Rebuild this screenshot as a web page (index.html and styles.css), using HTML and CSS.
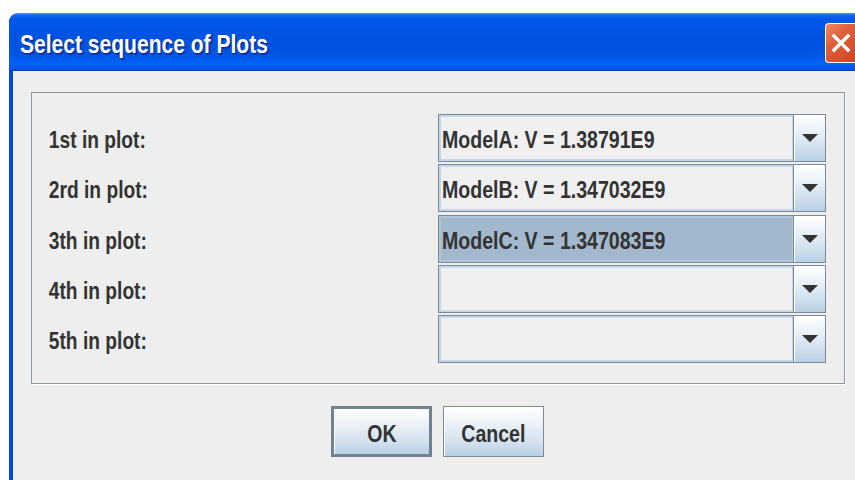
FILE: index.html
```html
<!DOCTYPE html>
<html>
<head>
<meta charset="utf-8">
<title>Select sequence of Plots</title>
<link rel="stylesheet" href="styles.css">
</head>
<body>
<div class="window">
  <div class="titlebar">
    <span class="title narrow">Select sequence of Plots</span>
    <span class="close" aria-label="Close">
      <svg width="24" height="24" viewBox="0 0 24 24"><path d="M5 5 L19 19 M19 5 L5 19" stroke="#fff" stroke-width="3.4" stroke-linecap="square"/></svg>
    </span>
  </div>
  <div class="content">
    <div class="panel">
      <div class="row">
        <span class="label narrow">1st in plot:</span>
        <div class="combo"><span class="field"><span class="narrow">ModelA: V = 1.38791E9</span></span><span class="arrow"><i></i></span></div>
      </div>
      <div class="row">
        <span class="label narrow">2rd in plot:</span>
        <div class="combo"><span class="field"><span class="narrow">ModelB: V = 1.347032E9</span></span><span class="arrow"><i></i></span></div>
      </div>
      <div class="row">
        <span class="label narrow">3th in plot:</span>
        <div class="combo"><span class="field selected"><span class="narrow">ModelC: V = 1.347083E9</span></span><span class="arrow"><i></i></span></div>
      </div>
      <div class="row">
        <span class="label narrow">4th in plot:</span>
        <div class="combo"><span class="field"></span><span class="arrow"><i></i></span></div>
      </div>
      <div class="row">
        <span class="label narrow">5th in plot:</span>
        <div class="combo"><span class="field"></span><span class="arrow"><i></i></span></div>
      </div>
    </div>
    <div class="buttons">
      <button class="btn default"><span class="narrow">OK</span></button>
      <button class="btn"><span class="narrow">Cancel</span></button>
    </div>
  </div>
</div>
</body>
</html>
```
FILE: styles.css
```css
html, body {
  margin: 0;
  padding: 0;
  background: #ffffff;
  overflow: hidden;
  width: 855px;
  height: 480px;
}

body {
  padding: 13px 0 0 9px;
  box-sizing: border-box;
  font-family: "Liberation Sans", Arial, sans-serif;
  font-weight: bold;
  color: #333333;
}

/* Tahoma-like condensed bold look */
.narrow {
  display: inline-block;
  transform: scaleX(0.815);
  transform-origin: left center;
  white-space: nowrap;
}

.window {
  width: 857px;
  height: 480px;
  box-sizing: border-box;
  border-radius: 9px 9px 0 0;
  background: #0048d8;
  padding: 0 4px;
  overflow: hidden;
}

.titlebar {
  height: 58px;
  margin: 0 -4px;
  padding: 0 0 0 11px;
  display: flex;
  align-items: center;
  justify-content: space-between;
  border-radius: 9px 9px 0 0;
  background: linear-gradient(#4d95fb 0, #1566f2 4%, #0058ea 10%, #0052e0 45%, #0054e4 70%, #0462fa 88%, #0556ec 95%, #0040c4 100%);
}

.title {
  color: #ffffff;
  font-size: 25.5px;
  text-shadow: 1px 1px 0 #0a2a8a, 2px 2px 1px rgba(10, 30, 120, 0.5);
  margin-top: 4px;
  transform: scaleX(0.825);
}

.close {
  width: 46px;
  height: 40px;
  margin-right: -5px;
  margin-top: 2px;
  box-sizing: border-box;
  border: 1px solid #ffffff;
  border-right: none;
  border-radius: 4px 0 0 4px;
  background: linear-gradient(135deg, #f08a66 0%, #e0603a 30%, #d24a26 70%, #c03a1a 100%);
  display: flex;
  align-items: center;
  padding-left: 3px;
}

.content {
  background: #eeeeee;
  height: 409px;
  padding: 21px 0 0 18px;
  box-sizing: border-box;
}

.panel {
  width: 814px;
  height: 292px;
  box-sizing: border-box;
  border: 1px solid #8a97a4;
  box-shadow: 1px 1px 0 #ffffff;
  padding: 21px 18px 0 16px;
  display: flex;
  flex-direction: column;
  gap: 2.25px;
}

.row {
  display: flex;
  align-items: center;
  justify-content: space-between;
  height: 48px;
}

.label {
  font-size: 24px;
  padding-left: 1px;
  margin-top: 4px;
  transform: scaleX(0.8);
}

.combo {
  width: 388px;
  height: 48px;
  box-sizing: border-box;
  border: 1px solid #7a8a99;
  display: flex;
  background: #eeeeee;
}

.field {
  flex: 1;
  min-width: 0;
  border: 2px solid #c4d6e8;
  border-right-width: 1px;
  background: #f0f0f0;
  font-size: 24px;
  padding-left: 1px;
  padding-top: 4px;
  display: flex;
  align-items: center;
  color: #333333;
}

.field.selected {
  background: #a3b8cc;
  border-color: #b0c4d8;
}

.arrow {
  width: 31px;
  border-left: 1px solid #7a8a99;
  background: linear-gradient(#ffffff 0%, #eaf1f8 35%, #c9dbec 80%, #b8cfe5 100%);
  box-shadow: inset 1px 1px 0 #ffffff;
  display: flex;
  align-items: center;
  justify-content: center;
}

.arrow i {
  display: block;
  width: 0;
  height: 0;
  border-left: 8px solid transparent;
  border-right: 8px solid transparent;
  border-top: 8px solid #333333;
  margin-left: 1px;
}

.buttons {
  display: flex;
  justify-content: center;
  gap: 11px;
  margin-top: 22px;
  padding-right: 18px;
}

.btn {
  width: 101px;
  height: 51px;
  box-sizing: border-box;
  border: 1px solid #7a8a99;
  background: linear-gradient(#ffffff 0%, #eef3f9 30%, #d4e2ef 70%, #b8cfe5 100%);
  box-shadow: inset 1px 1px 0 #ffffff;
  font-family: "Liberation Sans", Arial, sans-serif;
  font-weight: bold;
  font-size: 24px;
  color: #333333;
  padding: 4px 0 0 0;
  display: flex;
  align-items: center;
  justify-content: center;
}

.btn .narrow {
  transform-origin: center center;
}

.btn.default {
  border: 3px solid #6f8193;
}
```
